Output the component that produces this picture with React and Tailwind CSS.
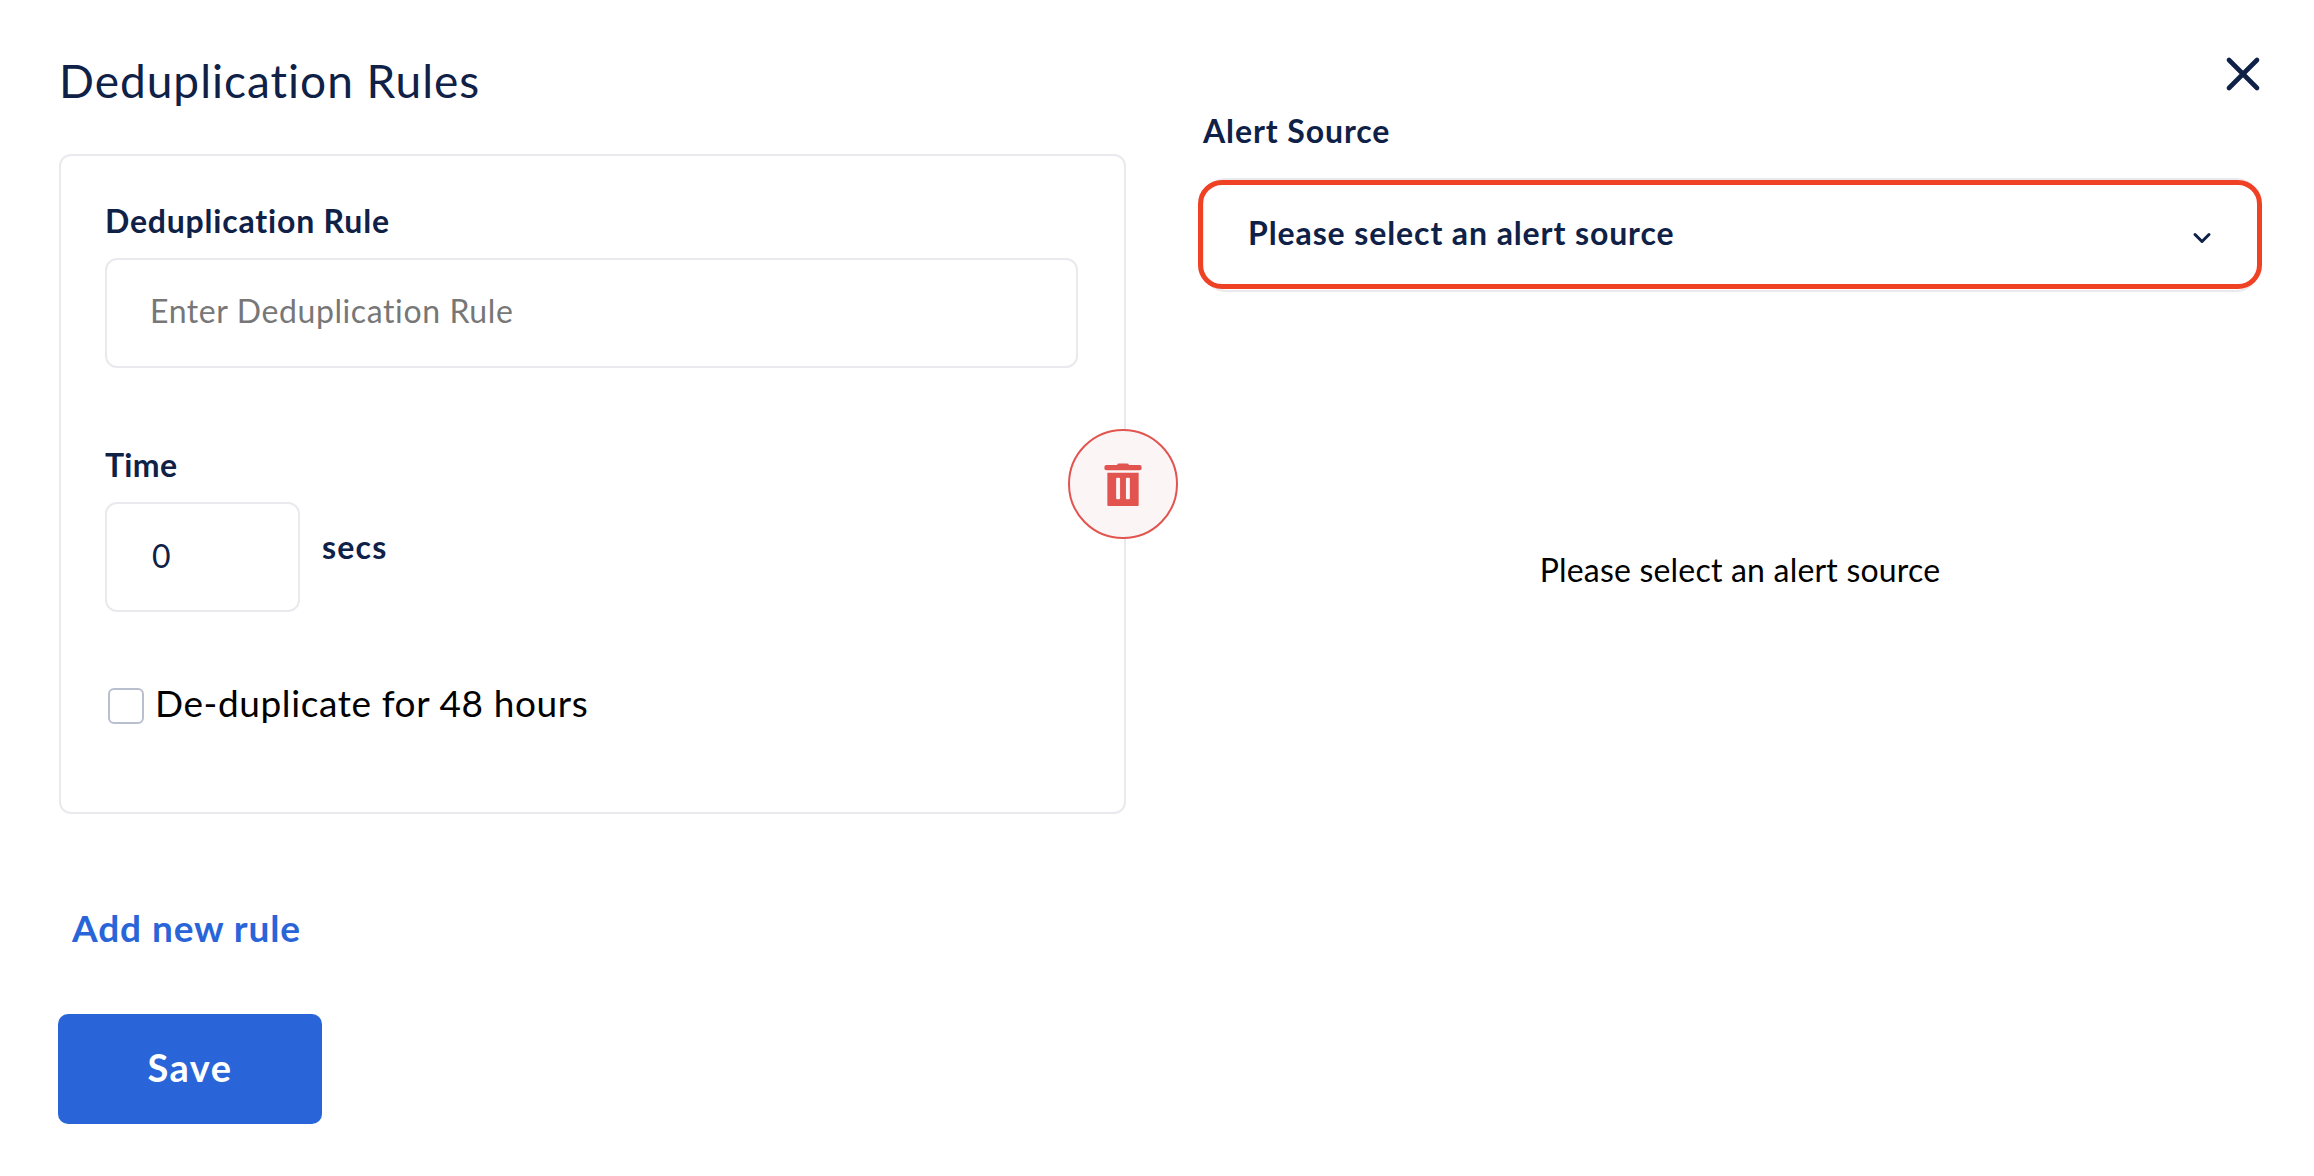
import React from "react";
import { X, ChevronDown } from "lucide-react";

const font = "font-['Lato','Liberation_Sans',sans-serif]";

function TrashIcon() {
    return (
        <svg width="38" height="45" viewBox="0 0 38 46" fill="#e2544f">
            <path d="M13 3 Q13 1.5 15 1.5 H23 Q25 1.5 25 3 H36 Q38 3 38 5 V7 Q38 8.5 36 8.5 H2 Q0 8.5 0 7 V5 Q0 3 2 3 Z" />
            <path fillRule="evenodd" d="M3 11 H35 V44 Q35 45 34 45 H4 Q3 45 3 44 Z M12 17 V37 Q12 38 13 38 H15 Q16 38 16 37 V17 Q16 16 15 16 H13 Q12 16 12 17 Z M22 17 V37 Q22 38 23 38 H25 Q26 38 26 37 V17 Q26 16 25 16 H23 Q22 16 22 17 Z" />
        </svg>
    );
}

export default function App() {
    return (
        <div className={`${font} flex h-[1176px] w-[2314px] overflow-hidden bg-white text-[#0f2147]`}>
            {/* left side, the rules form */}
            <div className="flex w-[1202px] shrink-0 flex-col pl-[59px]">
                <h1 className="mt-[56px] h-[50px] text-[46px] leading-[50px] tracking-[1px]">Deduplication Rules</h1>

                <div className="relative mt-[48px] h-[660px] w-[1067px] rounded-[12px] border-2 border-[#e9e9ee] pl-[44px] pt-[47px]">
                    <label className="block text-[32px] font-bold leading-[36px] tracking-[0.8px]">Deduplication Rule</label>
                    <div className="mt-[19px] flex h-[110px] w-[973px] items-center rounded-[12px] border-2 border-[#e9e9ee] pb-[5px] pl-[43px] text-[32px] tracking-[0.6px] text-[#777777]">
                        Enter Deduplication Rule
                    </div>

                    <label className="mt-[79px] block text-[32px] font-bold leading-[36px] tracking-[0.3px]">Time</label>
                    <div className="mt-[19px] flex items-start">
                        <div className="flex h-[110px] w-[195px] items-center rounded-[12px] border-2 border-[#e9e9ee] pb-[3px] pl-[45px] text-[32px]">
                            0
                        </div>
                        <span className="ml-[22px] mt-[27px] text-[32px] font-bold leading-[36px] tracking-[1.2px]">secs</span>
                    </div>

                    <div className="mt-[69px] flex items-center pl-[3px]">
                        <span className="h-[36px] w-[36px] rounded-[6px] border-2 border-[#b9bfce]" />
                        <span className="mb-[5px] ml-[11px] text-[37px] leading-[44px] tracking-[0.6px] text-black">De-duplicate for 48 hours</span>
                    </div>

                    {/* delete button sits over the card edge */}
                    <button className="absolute right-[-54px] top-[273px] flex h-[110px] w-[110px] items-center justify-center rounded-full border-2 border-[#e2544f] bg-[#fbf5f6]">
                        <TrashIcon />
                    </button>
                </div>

                <button className="ml-[13px] mt-[92px] self-start text-[37px] font-bold leading-[44px] tracking-[0.9px] text-[#2965d9]">
                    Add new rule
                </button>

                <button className="ml-[-1px] mt-[64px] h-[110px] w-[264px] rounded-[10px] bg-[#2965d9] pb-[3px] text-[38px] font-bold tracking-[1.5px] text-white">
                    Save
                </button>
            </div>

            {/* right side */}
            <div className="flex w-[1058px] shrink-0 flex-col">
                <div className="mr-[-11px] flex justify-end pt-[46px]">
                    <X className="h-[56px] w-[56px]" strokeWidth={2} />
                </div>
                <label className="mt-[11px] block pl-[1px] text-[32px] font-bold leading-[36px] tracking-[0.9px]">Alert Source</label>
                <div className="relative mt-[29px] flex h-[114px] items-center justify-between rounded-[24px] border-2 border-[#e9e9ee] pb-[4px] pl-[44px] pr-[42px]">
                    <span className="text-[32px] font-bold tracking-[0.9px]">Please select an alert source</span>
                    <ChevronDown className="mt-[10px] h-[28px] w-[28px]" strokeWidth={2.6} />
                    {/* red highlight drawn over the select */}
                    <div className="absolute bottom-[1px] left-[-6px] right-[-4px] top-0 rounded-[24px] border-[5px] border-[#ef4123]" />
                </div>
                <p className="mt-[260px] pl-[18px] text-center text-[32px] leading-[36px] tracking-[0.2px] text-black">Please select an alert source</p>
            </div>
        </div>
    );
}
